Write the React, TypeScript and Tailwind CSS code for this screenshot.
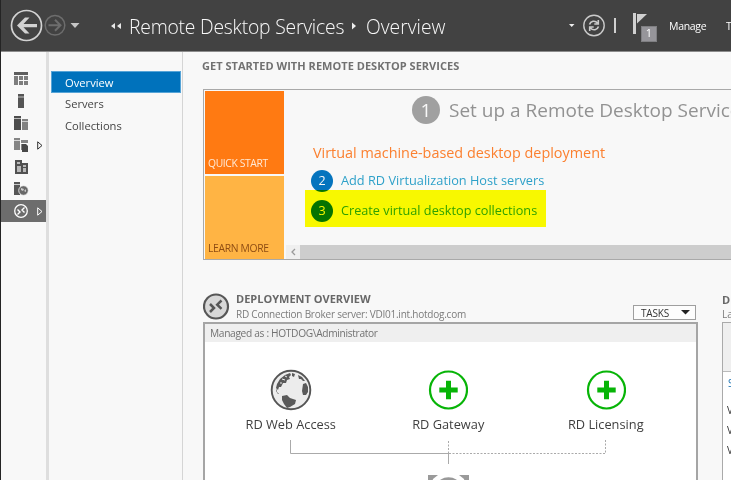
import React from 'react';

const railIcons: React.ReactNode[] = [
  <g key="dash">
    <path d="M1 1h14v3H1z" fill="#5e5e5e" />
    <path d="M1 5h4v9H1zM6 5h4v4H6zM11 5h4v4h-4zM6 10h4v4H6zM11 10h4v4h-4z" fill="#7e7e7e" />
  </g>,
  <g key="server">
    <path d="M5 1h6v14H5z" fill="#555" />
    <path d="M5 3h6v2H5z" fill="#8b8b8b" />
  </g>,
  <g key="servers">
    <path d="M1 1h7v14H1z" fill="#4d4d4d" />
    <path d="M1 3h7v1H1z" fill="#b8b8b8" />
    <path d="M9 4h6v11H9z" fill="#828282" />
    <path d="M9 6h6v1H9z" fill="#d0d0d0" />
  </g>,
  <g key="files">
    <path d="M1 1h6v12H1zM8 3h7v3H8zM8 7h3v6H8z" fill="#858585" />
    <path d="M1 3h6v1H1z" fill="#d8d8d8" />
    <path d="M9 7h4l2 2v6H9z" fill="#484848" />
  </g>,
  <g key="hyper">
    <path d="M2 1h7v3h6v11H2z" fill="#515151" />
    <path d="M4 3h3v2H4zM4 7h4v6H4zM10 6h3v2h-3zM10 9h3v4h-3z" fill="#b9b9b9" />
  </g>,
  <g key="iis">
    <path d="M1 1h6v13H1z" fill="#565656" />
    <path d="M1 3h6v1H1z" fill="#c8c8c8" />
    <circle cx="10.500" cy="9.500" r="4.800" fill="#696969" stroke="#f8f8f8" strokeWidth="0.800" />
    <path d="M8 7l3 1-1 2-2-1zM11 10l2-2v3z" fill="#ccc" />
  </g>,
  <g key="rds" fill="none" stroke="#fff">
    <circle cx="8" cy="8" r="6.300" strokeWidth="1.300" />
    <path d="M4.500 6.500L7 9 4.500 11.500M11.500 4.500L9 7l2.500 2.500" strokeWidth="1.400" />
  </g>,
];

function Badge({ n, className }: { n: string; className: string }) {
  return (
    <span className={`flex shrink-0 items-center justify-center rounded-full text-[#f8f8f8] ${className}`}>{n}</span>
  );
}

function Plus() {
  return (
    <svg width="40" height="40" viewBox="0 0 40 40">
      <circle cx="20.500" cy="20" r="18.500" fill="none" stroke="#07b407" strokeWidth="2.200" />
      <path d="M18 10.800h5v6.700h6.700v5H23v6.700h-5v-6.700h-6.700v-5H18z" fill="#07b407" />
    </svg>
  );
}

function Globe() {
  return (
    <svg width="42" height="42" viewBox="0 0 42 42">
      <circle cx="21" cy="21" r="19.300" fill="#ececec" stroke="#555" strokeWidth="1.900" />
      <g fill="#5a5a5a">
        <path d="M7 15l3-5 5-4 5-2 1 2-2 2 1 2-3 1-1 3-3 0-2 4-2 0-1 3-2-2zM22 4l3 1-1 3-2-1z" />
        <path d="M6 19l1 4 2 2-1 0-2-3z" />
        <path d="M12 27l5-1 3 3 6 2-1 4-5 3-3 1-3-4-2-4z" />
        <path d="M33 15l3-1 2 4v5l-2 3-3 0-1-4zM28 6l4 2 3 4-2 0-2-2-2 0z" />
      </g>
      <path d="M12 10l3 1M15 7l2 1M10 14l2 0" stroke="#ececec" />
    </svg>
  );
}

function Header() {
  return (
    <header className="flex h-[52px] shrink-0 items-center border-b border-[#8c8c8c] bg-[#424242] pl-[9px]">
      <svg width="34" height="34" viewBox="0 0 34 34" className="shrink-0" fill="none">
        <circle cx="16.500" cy="16.500" r="15" stroke="#d2d2d2" strokeWidth="1.700" />
        <path d="M27 15H13.500l6-6.500H15L7 16.500l8 8h4.500l-6-6.300H27z" fill="#d2d2d2" />
      </svg>
      <svg width="24" height="24" viewBox="0 0 24 24" className="shrink-0" fill="none" stroke="#6d6d6d">
        <circle cx="11" cy="11.300" r="9.800" strokeWidth="1.500" />
        <path d="M4.500 11.300h11.500M11 5.800l5.500 5.500-5.500 5.500" strokeWidth="2" />
      </svg>
      <svg width="10" height="6" viewBox="0 0 10 6" className="ml-[2px] shrink-0">
        <path d="M.5 0h9L5 5z" fill="#c6c6c6" />
      </svg>
      <svg width="12" height="8" viewBox="0 0 12 8" className="ml-[30px] shrink-0">
        <path d="M5 1v6L1 4zM11 1v6L7 4z" fill="#e8e8e8" />
      </svg>
      <span className="mt-[2px] ml-[7px] w-[222px] shrink-0 text-[19.300px] leading-[26px] font-light tracking-[-0.200px] text-[#f8f8f8]">Remote Desktop Services</span>
      <svg width="6" height="8" viewBox="0 0 6 8" className="shrink-0">
        <path d="M1 .5v7L5 4z" fill="#eee" />
      </svg>
      <span className="mt-[2px] ml-[9px] w-[203px] shrink-0 text-[19.300px] leading-[26px] font-light text-[#f8f8f8]">Overview</span>
      <svg width="6" height="4" viewBox="0 0 6 4" className="shrink-0">
        <path d="M0 0h5.500L2.700 3z" fill="#eee" />
      </svg>
      <svg width="24" height="24" viewBox="0 0 24 24" className="ml-[7px] shrink-0" fill="none" stroke="#cacaca">
        <circle cx="12" cy="11.500" r="10.200" strokeWidth="1.400" />
        <path d="M7.500 10.500C8.500 7 13 6 15.500 9M16.300 6v4h-4M16.500 12.500C15.500 16 11 17 8.500 14M7.700 17v-4h4" strokeWidth="1.600" />
      </svg>
      <span className="ml-[8px] h-[15px] w-[2px] shrink-0 bg-[#d0d0d0]" />
      <div className="relative ml-[17px] h-[26px] w-[24px] shrink-0">
        <svg width="16" height="21" viewBox="0 0 16 21">
          <path d="M0 0h3v21H0z" fill="#d0d0d0" />
          <path d="M4 1h10L4 10.500z" fill="#d0d0d0" />
        </svg>
        <span className="absolute top-[13px] left-[8px] flex h-[16px] w-[16px] items-center justify-center border border-[#7f7f82] bg-[#96959a] text-[11px] text-white">1</span>
      </div>
      <span className="mt-[2px] ml-[12px] w-[57px] shrink-0 text-[10.500px] tracking-[-0.300px] text-white">Manage</span>
      <span className="mt-[2px] shrink-0 text-[10.500px] text-white">Tools</span>
    </header>
  );
}

function Rail() {
  return (
    <aside className="w-[48px] shrink-0 border-r-[3px] border-[#dedede] pt-4">
      {railIcons.map((icon, i) => (
        <div key={i} className={`flex h-[22px] items-center pl-[12px] ${i === 6 ? 'bg-[#6d6d6d]' : ''}`}>
          <svg width="16" height="16" viewBox="0 0 16 16">{icon}</svg>
          {(i === 3 || i === 6) && (
            <svg width="6" height="9" viewBox="0 0 6 9" className="ml-[8px]">
              <path d="M.7.8v7.400L5 4.500z" fill="none" stroke={i === 6 ? '#fff' : '#333'} />
            </svg>
          )}
        </div>
      ))}
    </aside>
  );
}

function GetStarted() {
  return (
    <section className="mt-[15px] flex h-[171px] border-y border-l border-[#a9a9a9] pt-px pl-px">
      <div className="flex w-[79px] shrink-0 flex-col gap-[2px] text-[10.300px] leading-[14px]">
        <div className="flex h-[83px] items-end bg-[#ff7a12] pb-[4px] pl-[3px] tracking-[-0.350px] text-[#ffe9d6]">QUICK START</div>
        <div className="flex h-[83px] items-end bg-[#ffb444] pb-[4px] pl-[3px] tracking-[-0.300px] text-[#8f4d13]">LEARN MORE</div>
      </div>
      <div className="flex min-w-0 grow flex-col pl-[2px] whitespace-nowrap">
        <div className="mt-[5px] flex h-[28px] items-center pl-[126px]">
          <Badge n="1" className="h-[28px] w-[28px] bg-[#a0a0a0] text-[19px]" />
          <span className="ml-[9px] text-[19px] text-[#929292]">Set up a Remote Desktop Services deployment</span>
        </div>
        <div className="mt-[19px] h-[20px] pl-[27px] text-[14.400px] leading-[20px] text-[#fb8030]">Virtual machine-based desktop deployment</div>
        <div className="mt-[7px] flex h-[22px] items-center pl-[25px]">
          <Badge n="2" className="h-[22px] w-[22px] bg-[#0574be] text-[12.500px]" />
          <span className="ml-[8px] text-[12.750px] text-[#2ea1c9]">Add RD Virtualization Host servers</span>
        </div>
        <div className="relative mt-[8px] flex h-[22px] items-center pl-[25px]">
          <Badge n="3" className="h-[22px] w-[22px] bg-[#0574be] text-[12.500px]" />
          <span className="ml-[8px] text-[12.700px] text-[#2ea1c9]">Create virtual desktop collections</span>
          <span className="absolute top-[-10px] left-[19px] h-[37px] w-[241px] bg-[#ffff00] mix-blend-multiply" />
        </div>
        <div className="mt-[23px] flex h-[14px]">
          <div className="flex w-[14px] items-center justify-center bg-[#efefef]">
            <svg width="5" height="8" viewBox="0 0 5 8"><path d="M4 1L1 4l3 3" fill="none" stroke="#999" strokeWidth="1.300" /></svg>
          </div>
          <div className="grow bg-[#cdcdcd]" />
        </div>
      </div>
    </section>
  );
}

function Role({ icon, label }: { icon: React.ReactNode; label: string }) {
  return (
    <div className="flex w-[157.500px] shrink-0 flex-col items-center text-[12.800px] leading-[18px] text-[#3f3f3f]">
      <div className="flex h-[42px] items-center">{icon}</div>
      <span className="mt-[4px] whitespace-nowrap">{label}</span>
    </div>
  );
}

function Deployment() {
  return (
    <section className="w-[495px] shrink-0">
      <div className="flex h-[30px]">
        <svg width="28" height="28" viewBox="0 0 28 28" className="shrink-0">
          <circle cx="13" cy="14.500" r="12" fill="#d8d8d8" stroke="#575757" strokeWidth="2.200" />
          <path d="M7 12l4 4-4 4M18.500 8.500l-4.300 4.200 4.300 4.200" fill="none" stroke="#575757" strokeWidth="2.500" />
        </svg>
        <div className="ml-[5px] grow whitespace-nowrap">
          <div className="text-[11px] leading-[14px] font-bold text-[#686868]">DEPLOYMENT OVERVIEW</div>
          <div className="text-[10px] leading-[16px] tracking-[-0.230px] text-[#7b7b7b]">RD Connection Broker server: VDI01.int.hotdog.com</div>
        </div>
        <div className="mt-[13px] mr-[2px] flex h-[15px] w-[63px] items-center justify-between border border-[#9f9f9f] bg-[#fdfdfd] pr-[5px] pl-[7px] text-[10px] text-[#333]">
          <span className="mt-px tracking-[-0.200px]">TASKS</span>
          <svg width="9" height="5" viewBox="0 0 9 5"><path d="M0 0h9L4.500 4.500z" fill="#222" /></svg>
        </div>
      </div>
      <div className="h-[170px] border-2 border-b-0 border-[#a5a5a5] bg-white">
        <div className="h-[18px] bg-[#efefef] pl-[5px] text-[10.200px] leading-[18px] tracking-[-0.330px] text-[#727272]">Managed as : HOTDOG\Administrator</div>
        <div className="flex pt-[27px] pl-[7px]">
          <Role icon={<Globe />} label="RD Web Access" />
          <Role icon={<Plus />} label="RD Gateway" />
          <Role icon={<Plus />} label="RD Licensing" />
        </div>
        <svg width="340" height="48" viewBox="0 0 340 48" className="mt-[6px] ml-[80px]" fill="none" stroke="#aaa">
          <path d="M5.500 1v13.500h158M163.500 14v11" />
          <path d="M163.500 2v12M164 14.500h157M320.500 1v14" strokeDasharray="2 1.500" />
          <path d="M143 36h10l-5 4-2 8h-3zM174 36h10v12h-3l-2-8z" fill="#9a9a9a" stroke="none" />
          <path d="M156 42q7.500-4.500 15 0" stroke="#999" strokeWidth="3" />
        </svg>
      </div>
    </section>
  );
}

function Servers() {
  return (
    <section className="ml-[24px] w-[200px] shrink-0">
      <div className="pt-px text-[11px] leading-[14px] font-bold text-[#686868]">DEPLOYMENT SERVERS</div>
      <div className="h-[15px] text-[10px] leading-[15px] text-[#7b7b7b]">Last refreshed</div>
      <div className="h-[160px] border-t border-l border-[#aaa] bg-white text-[10px] text-[#333]">
        <div className="h-[49px] border-b border-[#bbb] bg-[#efefef]" />
        <div className="h-[28px] pl-[5px] leading-[22px] text-[#2478b5]">Server FQDN</div>
        <div className="pl-[4px] leading-[20px]">VDI01<br />VDI02<br />VDI03</div>
      </div>
    </section>
  );
}

export default function App() {
  return (
    <div className="flex h-[480px] w-[731px] flex-col overflow-hidden border-l border-[#242424] bg-[#f8f8f8] font-['Open_Sans','Noto_Sans',sans-serif]">
      <Header />
      <div className="flex min-h-0 grow">
        <Rail />
        <nav className="w-[134px] shrink-0 border-r border-[#d5d5d5] pt-[19px] pl-[2px] text-[11.200px] leading-[22px] text-[#444]">
          <div className="h-[22px] w-[130px] border border-[#56a4d7] bg-[#0072bc] pl-[13px] text-white">Overview</div>
          <div className="pl-[14px]">Servers</div>
          <div className="pl-[14px]">Collections</div>
        </nav>
        <main className="w-[548px] shrink-0 pt-[6px] pl-[19px]">
          <h1 className="h-[16px] text-[11px] leading-[15px] font-bold tracking-[0.030px] text-[#717171]">GET STARTED WITH REMOTE DESKTOP SERVICES</h1>
          <div className="pl-px">
            <GetStarted />
            <div className="mt-[32px] flex">
              <Deployment />
              <Servers />
            </div>
          </div>
        </main>
      </div>
    </div>
  );
}
